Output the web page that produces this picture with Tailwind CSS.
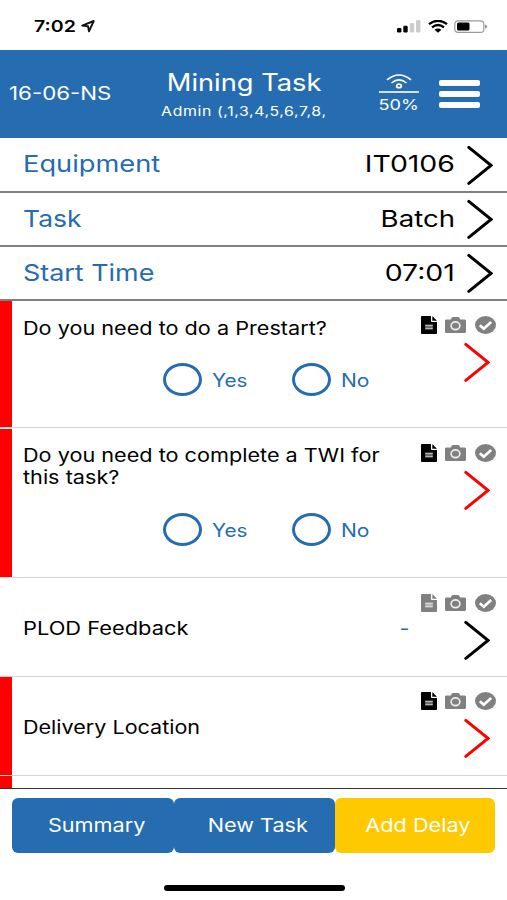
<!DOCTYPE html>
<html lang="en">
<head>
<meta charset="utf-8">
<title>Mining Task</title>
<script src="https://cdn.jsdelivr.net/npm/@tailwindcss/browser@4"></script>
</head>
<body class="bg-white">
<svg class="hidden">
  <symbol id="doc" viewBox="0 0 16 18" preserveAspectRatio="none">
    <path d="M1.2 0H10v5.2c0 .5.3.8.8.8H16v11c0 .6-.4 1-1 1H1.200C.5 18 0 17.600 0 17V1c0-.6.5-1 1.200-1Z" fill="currentColor"/>
    <path d="M11.300 0 16 4.700h-4.700Z" fill="currentColor"/>
    <path d="M4.200 8.600h7.600v4.800H4.200Z" fill="#fff" fill-opacity=".35"/>
    <path d="M4.200 9.500h7.600M4.200 12.500h7.600" stroke="#fff" stroke-opacity=".55" stroke-width="1.400"/>
  </symbol>
  <symbol id="camera" viewBox="0 0 22 16" preserveAspectRatio="none">
    <path d="M1.500 2.500H6L7.200.6C7.400.2 7.800 0 8.200 0h5.600c.4 0 .8.2 1 .6L16 2.500h4.500c.8 0 1.500.6 1.500 1.300v10.700c0 .8-.7 1.500-1.500 1.500h-19C.7 16 0 15.300 0 14.500V3.800c0-.7.7-1.300 1.500-1.300Z" fill="#808080"/>
    <ellipse cx="11" cy="8.800" rx="4.600" ry="3.900" fill="none" stroke="#eee" stroke-width="1.700"/>
  </symbol>
  <symbol id="check" viewBox="0 0 21 18" preserveAspectRatio="none">
    <ellipse cx="10.500" cy="9" rx="10.500" ry="9" fill="#808080"/>
    <path d="m4.800 9.200 4 3.500 7.400-6.700" fill="none" stroke="#fff" stroke-width="2.700"/>
  </symbol>
  <symbol id="chevron" viewBox="0 0 26 40">
    <path d="M1.800 2.400 24 20.400 1.800 38.400" fill="none" stroke="currentColor" stroke-width="3" stroke-linecap="round"/>
  </symbol>
</svg>
<div class="w-[507px] h-[900px] flex flex-col overflow-hidden bg-white font-['Inter','Liberation_Sans',sans-serif] text-black whitespace-nowrap">

  <div class="h-[50px] shrink-0 flex items-start pt-[17px] pl-[34px]">
    <div class="w-[47px] h-[19px] leading-[19px] text-[16px] font-semibold"><span class="inline-block origin-left scale-x-[1.22]">7:02</span></div>
    <svg class="mt-[3px] w-[14px] h-[13px]" viewBox="0 0 14 13"><path d="M1.200 5.600 12.700 1 8 11.300 7 6.300Z" fill="none" stroke="#111" stroke-width="1.900" stroke-linejoin="round"/></svg>
    <svg class="ml-[302px] mt-[3px] w-[24px] h-[13px]" viewBox="0 0 24 13"><rect x="0" y="8" width="4.400" height="4.500" rx="1.200"/><rect x="6.300" y="5.800" width="4.400" height="6.700" rx="1.200"/><rect x="12.800" y="3" width="4.400" height="9.500" rx="1.200" fill="#ccc"/><rect x="19" y="0" width="4.400" height="12.500" rx="1.200" fill="#ccc"/></svg>
    <svg class="ml-[7px] mt-[3px] w-[20px] h-[13px]" viewBox="0 0 20 13"><path d="M1 4.200Q10-2.600 19 4.200M4 7.300Q10 2.700 16 7.300" fill="none" stroke="#000" stroke-width="2.300"/><path d="M6.600 9.800Q10 7.400 13.400 9.800L10 12.800Z"/></svg>
    <svg class="ml-[6px] mt-[3px] w-[34px] h-[13px]" viewBox="0 0 34 13"><rect x=".8" y=".8" width="29" height="11.600" rx="3.200" fill="none" stroke="#999" stroke-width="1.200"/><rect x="3" y="2.600" width="12.500" height="8" rx="1.500"/><path d="M31 4.500c3 .8 3 3.400 0 4.200Z" fill="#999"/></svg>
  </div>

  <header class="h-[88px] shrink-0 bg-[#266cb0] text-white flex">
    <div class="w-[140px] pl-[9px] pt-[32px] leading-[22px] text-[18.500px]"><span class="inline-block origin-left scale-x-[1.205]">16-06-NS</span></div>
    <div class="w-[208px] flex flex-col items-center pt-[19px]">
      <h1 class="h-[28px] leading-[28px] text-[24px]"><span class="inline-block scale-x-[1.135]">Mining Task</span></h1>
      <p class="mt-[4px] h-[20px] leading-[20px] text-[13px] tracking-[0.500px]"><span class="inline-block scale-x-[1.22]">Admin (,1,3,4,5,6,7,8,</span></p>
    </div>
    <div class="w-[102px] flex flex-col items-center pt-[24px]">
      <svg class="w-[26px] h-[16px]" viewBox="0 0 26 16" fill="none" stroke="#fff" stroke-width="1.500"><path d="M1 5.800Q13-4 25 5.800M5.500 9Q13 2.800 20.500 9"/><ellipse cx="13" cy="11.900" rx="2.300" ry="1.800" stroke-width="1.800"/></svg>
      <div class="mt-[1px] w-[40px] h-[2px] bg-white/80"></div>
      <div class="mt-[2px] h-[20px] leading-[20px] text-[15px]"><span class="inline-block scale-x-[1.21]">50%</span></div>
    </div>
    <div class="-ml-[11px] pt-[30px] flex flex-col gap-[5px]">
      <div class="w-[41px] h-[6px] rounded-[2px] bg-white"></div>
      <div class="w-[41px] h-[6px] rounded-[2px] bg-white"></div>
      <div class="w-[41px] h-[6px] rounded-[2px] bg-white"></div>
    </div>
  </header>

  <div class="h-[55px] shrink-0 border-b-2 border-[#808080] flex items-center pl-[23px] pr-[14px] text-[23px]">
    <span class="origin-left scale-x-[1.185] text-[#266cb0]">Equipment</span>
    <span class="ml-auto origin-right scale-x-[1.235]">IT0106</span>
    <svg class="ml-[12px] w-[26px] h-[40px]"><use href="#chevron"/></svg>
  </div>
  <div class="h-[54px] shrink-0 border-b-2 border-[#808080] flex items-center pl-[23px] pr-[14px] text-[23px]">
    <span class="origin-left scale-x-[1.15] text-[#266cb0]">Task</span>
    <span class="ml-auto origin-right scale-x-[1.200]">Batch</span>
    <svg class="ml-[12px] w-[26px] h-[40px]"><use href="#chevron"/></svg>
  </div>
  <div class="h-[54px] shrink-0 border-b-2 border-[#808080] flex items-center pl-[23px] pr-[14px] text-[23px]">
    <span class="origin-left scale-x-[1.17] text-[#266cb0]">Start Time</span>
    <span class="ml-auto origin-right scale-x-[1.235]">07:01</span>
    <svg class="ml-[12px] w-[26px] h-[40px]"><use href="#chevron"/></svg>
  </div>

  <main class="h-[487px] shrink-0 overflow-hidden">
    <section class="h-[127px] border-b border-[#d4d4d4] flex">
      <div class="w-[12px] bg-[#ff0000]"></div>
      <div class="w-[409px] pl-[11px] pt-[16px]">
        <p class="h-[22px] leading-[22px] text-[18.500px]"><span class="inline-block origin-left scale-x-[1.17]">Do you need to do a Prestart?</span></p>
        <div class="mt-[24px] ml-[140px] flex items-center text-[18px] leading-[22px] text-[#266cb0]">
          <i class="w-[39px] h-[33px] rounded-[50%] border-3 border-[#266cb0]"></i>
          <div class="ml-[10px] w-[80px] pt-[2px]"><span class="inline-block origin-left scale-x-[1.15]">Yes</span></div>
          <i class="w-[39px] h-[33px] rounded-[50%] border-3 border-[#266cb0]"></i>
          <div class="ml-[10px] pt-[2px]"><span class="inline-block origin-left scale-x-[1.17]">No</span></div>
        </div>
      </div>
      <div class="pt-[15px]">
        <div class="flex items-center"><svg class="w-[16px] h-[18px]"><use href="#doc"/></svg><svg class="ml-[8px] w-[21px] h-[16px]"><use href="#camera"/></svg><svg class="ml-[9px] w-[21px] h-[18px]"><use href="#check"/></svg></div>
        <svg class="ml-[43px] mt-[8px] w-[26px] h-[40px] text-[#ff0000]"><use href="#chevron"/></svg>
      </div>
    </section>

    <section class="h-[150px] border-b border-[#d4d4d4] pt-px flex">
      <div class="w-[12px] bg-[#ff0000]"></div>
      <div class="w-[409px] pl-[11px] pt-[15px]">
        <p class="h-[44px] leading-[22px] text-[18.500px]"><span class="inline-block origin-left scale-x-[1.17]">Do you need to complete a TWI for<br>this task?</span></p>
        <div class="mt-[25px] ml-[140px] flex items-center text-[18px] leading-[22px] text-[#266cb0]">
          <i class="w-[39px] h-[33px] rounded-[50%] border-3 border-[#266cb0]"></i>
          <div class="ml-[10px] w-[80px] pt-[2px]"><span class="inline-block origin-left scale-x-[1.15]">Yes</span></div>
          <i class="w-[39px] h-[33px] rounded-[50%] border-3 border-[#266cb0]"></i>
          <div class="ml-[10px] pt-[2px]"><span class="inline-block origin-left scale-x-[1.17]">No</span></div>
        </div>
      </div>
      <div class="pt-[15px]">
        <div class="flex items-center"><svg class="w-[16px] h-[18px]"><use href="#doc"/></svg><svg class="ml-[8px] w-[21px] h-[16px]"><use href="#camera"/></svg><svg class="ml-[9px] w-[21px] h-[18px]"><use href="#check"/></svg></div>
        <svg class="ml-[43px] mt-[8px] w-[26px] h-[40px] text-[#ff0000]"><use href="#chevron"/></svg>
      </div>
    </section>

    <section class="h-[99px] border-b border-[#d4d4d4] flex">
      <div class="w-[421px] pl-[23px] pr-[11px] pt-[3px] flex items-center text-[18.500px]">
        <span class="origin-left scale-x-[1.18]">PLOD Feedback</span>
        <span class="ml-auto origin-right scale-x-[1.17] text-[#266cb0]">-</span>
      </div>
      <div class="pt-[16px]">
        <div class="flex items-center"><svg class="w-[16px] h-[18px] text-[#808080]"><use href="#doc"/></svg><svg class="ml-[8px] w-[21px] h-[16px]"><use href="#camera"/></svg><svg class="ml-[9px] w-[21px] h-[18px]"><use href="#check"/></svg></div>
        <svg class="ml-[43px] mt-[8px] w-[26px] h-[40px]"><use href="#chevron"/></svg>
      </div>
    </section>

    <section class="h-[99px] border-b border-[#d4d4d4] flex">
      <div class="w-[12px] bg-[#ff0000]"></div>
      <div class="w-[409px] pl-[11px] pt-[4px] flex items-center text-[18.500px]">
        <span class="origin-left scale-x-[1.165]">Delivery Location</span>
      </div>
      <div class="pt-[15px]">
        <div class="flex items-center"><svg class="w-[16px] h-[18px]"><use href="#doc"/></svg><svg class="ml-[8px] w-[21px] h-[16px]"><use href="#camera"/></svg><svg class="ml-[9px] w-[21px] h-[18px]"><use href="#check"/></svg></div>
        <svg class="ml-[43px] mt-[8px] w-[26px] h-[40px] text-[#ff0000]"><use href="#chevron"/></svg>
      </div>
    </section>
    <div class="h-[12px] w-[12px] bg-[#ff0000]"></div>
  </main>

  <footer class="shrink-0 h-[112px] border-t border-[#333] pt-[9px] flex flex-col items-center">
    <div class="w-[484px] h-[55px] flex text-[18.500px] text-white">
      <div class="flex-1 rounded-[6px] bg-[#266cb0] flex items-center justify-center pl-[7px]"><span class="scale-x-[1.17]">Summary</span></div>
      <div class="flex-1 rounded-[6px] bg-[#266cb0] flex items-center justify-center pl-[6px]"><span class="scale-x-[1.17]">New Task</span></div>
      <div class="flex-1 rounded-[6px] bg-[#ffc902] flex items-center justify-center pl-[5px]"><span class="scale-x-[1.17]">Add Delay</span></div>
    </div>
    <div class="mt-[32px] ml-[1px] w-[181px] h-[6px] rounded-full bg-black"></div>
  </footer>
</div>
</body>
</html>
